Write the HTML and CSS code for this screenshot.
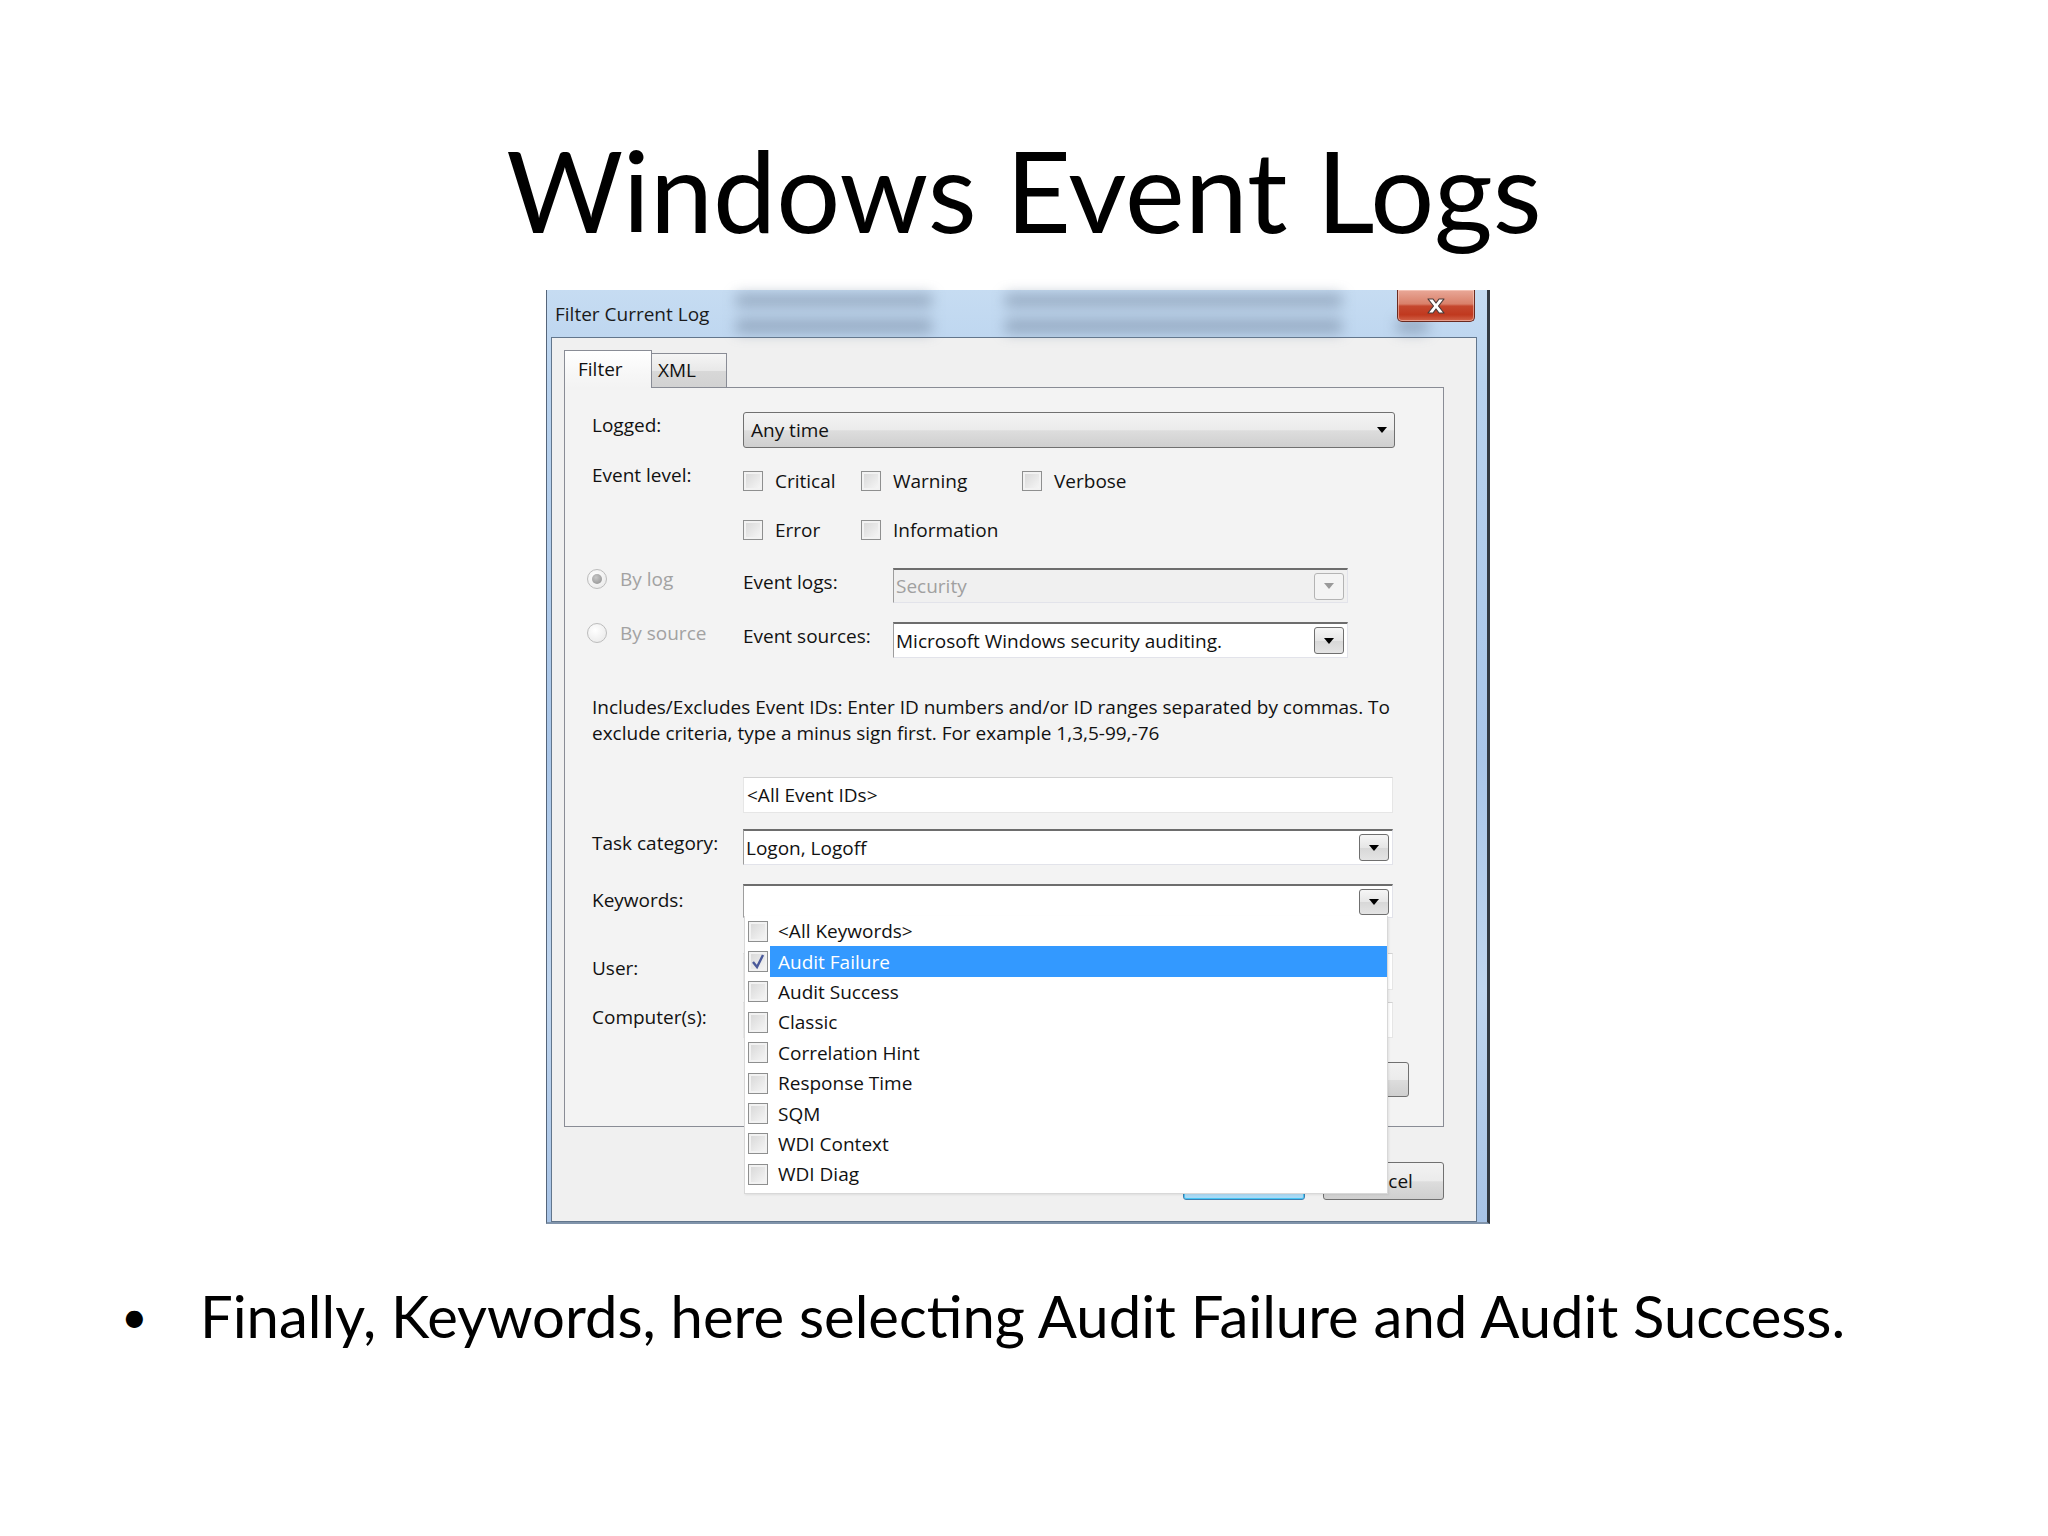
FILE: index.html
```html
<!DOCTYPE html>
<html lang="en">
  <head>
    <meta charset="UTF-8" />
    <title>Windows Event Logs</title>
    <link rel="stylesheet" href="styles.css">
  </head>
  <body>
    <div class="slide">
      <h1 class="title">Windows Event Logs</h1>

      <div class="dialog">
        <div class="titlebar">
          <span class="caption">Filter Current Log</span>
          <button type="button" class="close">
            <svg width="22" height="16" viewBox="0 0 22 16">
              <polygon points="3,1 8,1 11,5 14,1 19,1 13.5,8 19,15 14,15 11,11 8,15 3,15 8.5,8" />
            </svg>
          </button>
        </div>

        <div class="client">
          <div class="tabs">
            <div class="tab active">Filter</div>
            <div class="tab">XML</div>
          </div>

          <div class="panel">
            <div class="row">
              <span class="label">Logged:</span>
              <div class="select"><span>Any time</span><i class="arrow"></i></div>
            </div>

            <div class="row levels">
              <span class="label up">Event level:</span>
              <div class="checks">
                <div class="checkline">
                  <span class="check"><span class="box"></span>Critical</span>
                  <span class="check w2"><span class="box"></span>Warning</span>
                  <span class="check"><span class="box"></span>Verbose</span>
                </div>
                <div class="checkline">
                  <span class="check"><span class="box"></span>Error</span>
                  <span class="check w2"><span class="box"></span>Information</span>
                </div>
              </div>
            </div>

            <div class="row bylog">
              <span class="radio-opt"><span class="radio on"></span>By log</span>
              <span class="label2">Event logs:</span>
              <div class="combo disabled"><span>Security</span><span class="dropbtn"><i class="arrow"></i></span></div>
            </div>

            <div class="row bysource">
              <span class="radio-opt"><span class="radio"></span>By source</span>
              <span class="label2">Event sources:</span>
              <div class="combo tall"><span>Microsoft Windows security auditing.</span><span class="dropbtn"><i class="arrow"></i></span></div>
            </div>

            <p class="desc">Includes/Excludes Event IDs: Enter ID numbers and/or ID ranges separated by commas. To<br>exclude criteria, type a minus sign first. For example 1,3,5-99,-76</p>

            <div class="row ids">
              <span class="label"></span>
              <div class="textbox">&lt;All Event IDs&gt;</div>
            </div>

            <div class="row task">
              <span class="label l1">Task category:</span>
              <div class="combo wide"><span>Logon, Logoff</span><span class="dropbtn"><i class="arrow"></i></span></div>
            </div>

            <div class="row keywords">
              <span class="label l3">Keywords:</span>
              <div class="combo wide short"><span></span><span class="dropbtn"><i class="arrow"></i></span></div>
            </div>

            <div class="row user">
              <span class="label l2">User:</span>
              <div class="textbox tall"></div>
            </div>

            <div class="row computer">
              <span class="label l2">Computer(s):</span>
              <div class="textbox"></div>
            </div>

            <div class="row clear">
              <button type="button" class="btn">Clear</button>
            </div>
          </div>

          <div class="actions">
            <button type="button" class="btn ok">OK</button>
            <button type="button" class="btn cancel">Cancel</button>
          </div>
        </div>

        <div class="droplist">
          <div class="item"><span class="box"></span><span class="text">&lt;All Keywords&gt;</span></div>
          <div class="item sel"><span class="box checked"><svg width="18" height="19" viewBox="0 0 18 19"><path d="M4 10 L8 15 L14 3" /></svg></span><span class="text">Audit Failure</span></div>
          <div class="item"><span class="box"></span><span class="text">Audit Success</span></div>
          <div class="item"><span class="box"></span><span class="text">Classic</span></div>
          <div class="item"><span class="box"></span><span class="text">Correlation Hint</span></div>
          <div class="item"><span class="box"></span><span class="text">Response Time</span></div>
          <div class="item"><span class="box"></span><span class="text">SQM</span></div>
          <div class="item"><span class="box"></span><span class="text">WDI Context</span></div>
          <div class="item"><span class="box"></span><span class="text">WDI Diag</span></div>
        </div>
      </div>

      <ul class="points">
        <li>Finally, Keywords, here selecting Audit Failure and Audit Success.</li>
      </ul>
    </div>
  </body>
</html>
```

FILE: styles.css
```css
* {
  box-sizing: border-box;
}
body {
  margin: 0;
  background: #fff;
  color: #000;
}
.slide {
  width: 2048px;
  height: 1536px;
  overflow: hidden;
}
.title {
  margin: 0;
  padding-top: 121px;
  font: 400 113px/136px Lato, sans-serif;
  text-align: center;
}

/* dialog window */
.dialog {
  position: relative;
  width: 944px;
  height: 934px;
  margin: 33px 0 0 546px;
  display: flex;
  flex-direction: column;
  padding: 0 10px 0 4px;
  border-left: 1px solid #55657a;
  border-right: 3px solid #333a42;
  border-bottom: 2px solid #8194ab;
  background: linear-gradient(#c6dcf2, #b8d2ee 10%, #a9c6e9 50%, #c0d6ef 75%, #a7c3e6);
  font: 19px/26px "Open Sans", sans-serif;
  color: #111;
}
.titlebar {
  position: relative;
  height: 47px;
  flex: none;
  display: flex;
  align-items: center;
  padding-left: 4px;
}
.titlebar::before {
  content: "";
  position: absolute;
  inset: 0;
  background:
    linear-gradient(#6f8199, #6f8199) 185px 4px / 196px 13px no-repeat,
    linear-gradient(#6f8199, #6f8199) 185px 29px / 196px 14px no-repeat,
    linear-gradient(#6f8199, #6f8199) 454px 4px / 337px 13px no-repeat,
    linear-gradient(#6f8199, #6f8199) 454px 29px / 337px 14px no-repeat,
    linear-gradient(#6f8199, #6f8199) 846px 29px / 31px 14px no-repeat;
  filter: blur(7px);
  opacity: 0.55;
}
.caption {
  position: relative;
  color: #1a1a1a;
}
.close {
  position: relative;
  margin-left: auto;
  margin-right: 2px;
  align-self: flex-start;
  width: 78px;
  height: 32px;
  padding: 0;
  display: flex;
  align-items: center;
  justify-content: center;
  border: 1px solid #6a2a20;
  border-top: 0;
  border-radius: 0 0 5px 5px;
  background: linear-gradient(#e9a898, #d9806a 45%, #c5472e 52%, #c0391f 80%, #d2644a);
  box-shadow: inset 0 0 0 1px rgba(255, 220, 210, 0.5);
}
.close polygon {
  fill: #fff;
  stroke: #4a3a38;
  stroke-width: 1.2;
  stroke-linejoin: round;
}

.client {
  flex: 1;
  display: flex;
  flex-direction: column;
  border: 1px solid #62768c;
  background: #f0f0f0;
  padding: 12px 32px 0 12px;
}
.tabs {
  display: flex;
  align-items: flex-end;
  height: 37px;
  flex: none;
}
.tab {
  width: 75px;
  height: 34px;
  padding-left: 6px;
  border: 1px solid #898c95;
  border-bottom: 0;
  line-height: 32px;
  background: linear-gradient(#f5f5f5, #e8e8e8 50%, #d8d8d8 52%, #d2d2d2);
}
.tab + .tab {
  border-left: 0;
}
.tab.active {
  position: relative;
  z-index: 1;
  width: 88px;
  height: 38px;
  margin-bottom: -1px;
  padding-left: 13px;
  line-height: 36px;
  background: linear-gradient(#fff, #f7f7f7 60%, #f3f3f3);
}
.panel {
  height: 740px;
  flex: none;
  border: 1px solid #898c95;
  background: #f3f3f3;
  padding: 24px 48px 0 27px;
}
.row {
  display: flex;
  align-items: flex-start;
}
.label {
  width: 151px;
  flex: none;
}
.label2 {
  width: 150px;
  flex: none;
  margin-top: 1px;
}
.up {
  margin-top: -6px;
}
.l1 {
  margin-top: 1px;
}
.l2 {
  margin-top: 2px;
}
.l3 {
  margin-top: 3px;
}
.arrow {
  width: 0;
  height: 0;
  border-left: 5px solid transparent;
  border-right: 5px solid transparent;
  border-top: 6px solid #000;
}

.select {
  width: 652px;
  height: 36px;
  display: flex;
  align-items: center;
  justify-content: space-between;
  padding: 0 7px;
  border: 1px solid #707070;
  border-radius: 3px;
  background: linear-gradient(#f3f3f3, #ebebeb 50%, #dddddd 52%, #cfcfcf);
}

.levels {
  margin-top: 20px;
}
.checkline {
  display: flex;
  align-items: center;
  height: 26px;
}
.checkline + .checkline {
  margin-top: 23px;
}
.check {
  display: flex;
  align-items: center;
  gap: 12px;
  width: 118px;
}
.check.w2 {
  width: 161px;
}
.box {
  width: 20px;
  height: 20px;
  flex: none;
  border: 1px solid #8e8f8f;
  background: linear-gradient(135deg, #d6d6d6, #f8f8f8);
  box-shadow: inset 0 0 0 2px #f2f2f2;
}

.bylog {
  margin-top: 25px;
}
.bysource {
  margin-top: 19px;
}
.radio-opt {
  width: 156px;
  flex: none;
  margin: -2px 0 0 -5px;
  display: flex;
  align-items: center;
  gap: 13px;
  color: #a2a2a2;
}
.radio {
  width: 20px;
  height: 20px;
  border-radius: 50%;
  border: 1px solid #bcbcbc;
  background: radial-gradient(circle at 40% 35%, #fff, #e6e6e6);
  display: flex;
  align-items: center;
  justify-content: center;
}
.radio.on::after {
  content: "";
  width: 10px;
  height: 10px;
  border-radius: 50%;
  background: radial-gradient(circle at 40% 35%, #c8c8c8, #8c8c8c);
}

.combo {
  width: 455px;
  height: 35px;
  display: flex;
  align-items: center;
  justify-content: space-between;
  padding: 0 3px 0 2px;
  background: #fff;
  border: 1px solid #e2e3ea;
  border-top: 2px solid #6d6d6d;
  border-left-color: #9d9d9d;
}
.combo.tall {
  height: 36px;
}
.combo.wide {
  width: 650px;
  height: 36px;
}
.combo.short {
  height: 34px;
}
.combo.disabled {
  background: #f0f0f0;
  color: #a0a0a0;
}
.dropbtn {
  width: 30px;
  height: 27px;
  display: flex;
  align-items: center;
  justify-content: center;
  border: 1px solid #6f6f6f;
  border-radius: 3px;
  background: linear-gradient(#f6f6f6, #e6e6e6 50%, #d8d8d8 52%, #e4e4e4);
}
.short .dropbtn {
  height: 26px;
}
.disabled .dropbtn {
  border-color: #b4b4b4;
  background: #f4f4f4;
}
.disabled .arrow {
  border-top-color: #9a9a9a;
}

.desc {
  margin: 36px 0 0;
  line-height: 26px;
  white-space: nowrap;
}
.ids {
  margin-top: 31px;
}
.textbox {
  width: 650px;
  height: 36px;
  padding-left: 3px;
  line-height: 34px;
  background: #fff;
  border: 1px solid #e6e6e6;
  border-top-color: #d2d2d2;
}
.textbox.tall {
  height: 37px;
}
.task {
  margin-top: 16px;
}
.keywords {
  margin-top: 19px;
}
.user {
  margin-top: 35px;
}
.computer {
  margin-top: 12px;
}
.clear {
  margin: 24px -14px 0 0;
  justify-content: flex-end;
}

.btn {
  height: 35px;
  width: 100px;
  padding: 0;
  font: inherit;
  color: #111;
  border: 1px solid #707070;
  border-radius: 3px;
  background: linear-gradient(#f2f2f2, #ebebeb 50%, #dddddd 52%, #cfcfcf);
}
.actions {
  display: flex;
  justify-content: flex-end;
  gap: 18px;
  margin-top: 35px;
}
.actions .btn {
  height: 38px;
  width: 121px;
}
.actions .ok {
  width: 122px;
  border-color: #3c7fb1;
  box-shadow: inset 0 0 0 1px #48c6f5;
  background: linear-gradient(#eaf6fd, #d9f0fc 50%, #bee6fd 52%, #a7d9f5);
}

/* open keyword list */
.droplist {
  position: absolute;
  left: 197px;
  top: 626px;
  width: 644px;
  height: 278px;
  background: #fff;
  border: 1px solid #d8d8d8;
  border-top: 0;
  box-shadow: 1px 1px 2px rgba(0, 0, 0, 0.08);
}
.item {
  height: 30.4px;
  display: flex;
  align-items: center;
  padding-left: 3px;
}
.item .box {
  height: 21px;
  display: flex;
  align-items: center;
  justify-content: center;
}
.item .text {
  flex: 1;
  align-self: stretch;
  display: flex;
  align-items: center;
  margin-left: 2px;
  padding-left: 8px;
}
.item.sel .text {
  background: #3399ff;
  color: #fff;
}
.checked path {
  fill: none;
  stroke: #4b5a9a;
  stroke-width: 2.4;
}

.points {
  margin: 58px 0 0;
  padding: 0 0 0 121px;
  list-style: none;
  font: 58px/67px Lato, sans-serif;
}
.points li {
  display: flex;
  align-items: center;
}
.points li::before {
  content: "\2022";
  width: 79px;
  flex: none;
  font-size: 46px;
  line-height: 60px;
}
```
